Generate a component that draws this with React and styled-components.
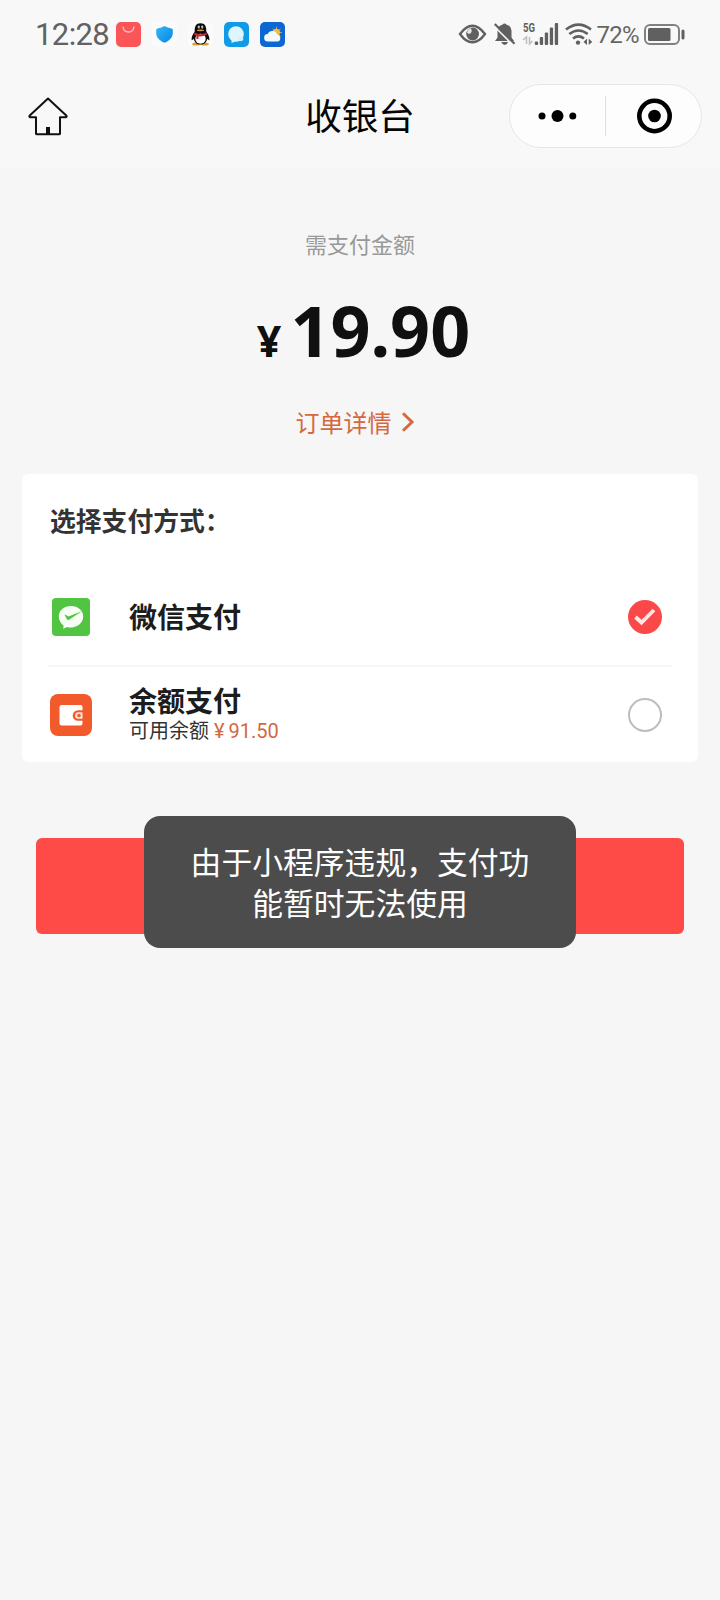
import React, { useState } from "react";
import styled, { createGlobalStyle } from "styled-components";

const methods = [
  { id: "wechat", name: "微信支付", icon: <WechatPayIcon /> },
  { id: "balance", name: "余额支付", icon: <WalletIcon />, balance: "91.50" },
];

export default function App() {
  const [selected, setSelected] = useState("wechat");

  return (
    <Page>
      <GlobalStyle />
      <StatusBar />
      <NavBar>
        <HomeButton aria-label="home">
          <HomeIcon />
        </HomeButton>
        <Title>收银台</Title>
        <Capsule>
          <CapsuleButton aria-label="more">
            <svg width="40" height="14" viewBox="0 0 40 14">
              <circle cx="4" cy="7" r="3.5" />
              <circle cx="19.5" cy="7" r="6" />
              <circle cx="34.8" cy="7" r="3.5" />
            </svg>
          </CapsuleButton>
          <CapsuleLine />
          <CapsuleButton aria-label="close">
            <svg width="36" height="36" viewBox="0 0 36 36">
              <circle cx="18.5" cy="18" r="15.2" fill="none" stroke="#000" strokeWidth="4.6" />
              <circle cx="18.5" cy="18" r="6.3" />
            </svg>
          </CapsuleButton>
        </Capsule>
      </NavBar>

      <Summary>
        <Label>需支付金额</Label>
        <Amount>
          <Currency>¥</Currency>
          <Price>19.90</Price>
        </Amount>
        <DetailLink>
          订单详情
          <svg width="14" height="20" viewBox="0 0 14 20" fill="none">
            <path d="M2 1.2 L11 10 L2 18.8" stroke="#d5683f" strokeWidth="3" />
          </svg>
        </DetailLink>
      </Summary>

      <Card>
        <CardTitle>选择支付方式：</CardTitle>
        {methods.map((item) => (
          <Method key={item.id} onClick={() => setSelected(item.id)}>
            <MethodIcon>{item.icon}</MethodIcon>
            <MethodText>
              <MethodName>{item.name}</MethodName>
              {item.balance ? (
                <Balance>
                  可用余额<b>¥</b>
                  <i>{item.balance}</i>
                </Balance>
              ) : null}
            </MethodText>
            <Radio checked={selected === item.id} />
          </Method>
        ))}
      </Card>

      <PayArea>
        <PayButton aria-label="pay" />
        <Toast>
          由于小程序违规，支付功
          <br />
          能暂时无法使用
        </Toast>
      </PayArea>
    </Page>
  );
}

function StatusBar() {
  return (
    <Status>
      <Time>12:28</Time>
      <AppIcons>
        <svg width="25" height="25" viewBox="0 0 25 25">
          <rect width="25" height="25" rx="5" fill="#fb5558" />
          <path d="M7 4.5 Q7.5 10 12.5 10 T18 4.5" fill="none" stroke="#ffc2b8" strokeWidth="1.4" />
        </svg>
        <svg width="25" height="25" viewBox="0 0 25 25">
          <defs>
            <linearGradient id="shield" x1="0" y1="0" x2="1" y2="1">
              <stop offset="0" stopColor="#30b8f5" />
              <stop offset="1" stopColor="#0a86e6" />
            </linearGradient>
          </defs>
          <rect width="25" height="25" rx="5" fill="#fbfbfb" />
          <path d="M12.5 4 Q15.5 6 19.6 6.4 Q20.8 6.6 20.8 8 V11.5 Q20.5 16.5 14.5 20 Q12.5 21.2 10.5 20 Q4.5 16.5 4.2 11.5 V8 Q4.2 6.6 5.4 6.4 Q9.5 6 12.5 4Z" fill="url(#shield)" />
        </svg>
        <svg width="25" height="25" viewBox="0 0 25 25">
          <rect width="25" height="25" rx="5" fill="#fbfbfb" />
          <ellipse cx="8.3" cy="22" rx="4.2" ry="1.6" fill="#e0a030" />
          <ellipse cx="16.7" cy="22" rx="4.2" ry="1.6" fill="#e0a030" />
          <path d="M12.5 1.2 C7.8 1.2 6.6 4.6 6.7 9.5 C5 12 3.3 15 3.6 18 Q4.2 18.6 5.6 16.7 Q7 22.6 12.5 22.6 T19.4 16.7 Q20.8 18.6 21.4 18 C21.7 15 20 12 18.3 9.5 C18.4 4.6 17.2 1.2 12.5 1.2Z" fill="#0c0a0c" />
          <ellipse cx="12.5" cy="16.8" rx="5.2" ry="5" fill="#fff" />
          <ellipse cx="10.8" cy="5" rx="1.1" ry="1.6" fill="#fff" />
          <ellipse cx="14.2" cy="5" rx="1.1" ry="1.6" fill="#fff" />
          <circle cx="11" cy="5.1" r=".6" />
          <circle cx="14" cy="5.1" r=".6" />
          <ellipse cx="12.5" cy="8.3" rx="3.6" ry=".9" fill="#d99a3a" />
          <path d="M6.6 10.5 Q12.5 13.8 18.4 10.5 L18.8 12.8 Q15 14.8 10.5 14.4 V17 H8.4 V14 L6.2 12.8Z" fill="#c02a35" />
        </svg>
        <svg width="25" height="25" viewBox="0 0 25 25">
          <rect width="25" height="25" rx="5" fill="#0f9be8" />
          <circle cx="12" cy="12" r="7.8" fill="#dff5fe" />
          <circle cx="17" cy="16.8" r="2.4" fill="#cdf0fc" />
          <path d="M7.5 18 L7.6 21 L12 19Z" fill="#dff5fe" />
        </svg>
        <svg width="25" height="25" viewBox="0 0 25 25">
          <rect width="25" height="25" rx="5" fill="#0c66d4" />
          <path d="M16.5 4.8 V16 M11 10.5 H22 M12.5 6.8 L20.5 14.5 M20.5 6.8 L12.5 14.5" stroke="#b9a565" strokeWidth="1" />
          <circle cx="16.3" cy="10.5" r="3.7" fill="#f0bd4b" />
          <path d="M8 19.5 a3.7 3.7 0 0 1 -.3-7.4 a5 5 0 0 1 9.4 .5 a3.5 3.5 0 0 1 .4 6.9Z" fill="#f3faff" />
        </svg>
      </AppIcons>
      <Signals>
        <svg width="139" height="28" viewBox="458 20 139 28" fill="#606060" overflow="visible">
          {/* eye */}
          <path d="M460 34 Q466 25.7 472.4 25.7 T485 34 Q479 42.3 472.4 42.3 T460 34Z" fill="none" stroke="#606060" strokeWidth="2.4" />
          <circle cx="472.6" cy="34" r="6.4" />
          <path d="M467 32.5 Q467.5 28.8 471 28.2 Q473 32.5 469.5 33.8 Q468 34.2 467 32.5Z" fill="#e4e4e4" />
          {/* muted bell */}
          <path d="M495 41 L497.5 37.5 V31 Q498 25.5 502.3 24.8 Q504.5 22 506.7 24.8 Q511 25.5 511.5 31 V37.5 L514 41Z M501.3 42 H508 Q507 45 504.7 45 T501.3 42Z" />
          <path d="M494.5 26.5 L512.5 44.5" stroke="#f8f8f8" strokeWidth="1.6" />
          <path d="M494.8 24 L514.5 43.8" stroke="#606060" strokeWidth="2.2" />
          {/* 5G and signal bars */}
          <text x="523" y="32.4" fontFamily="Roboto, sans-serif" fontWeight="700" fontSize="12.5" textLength="12" lengthAdjust="spacingAndGlyphs">5G</text>
          <path d="M523 40 L526.5 37 V44 M532.5 41 L529.5 44 V37" fill="none" stroke="#bdbdbd" strokeWidth="1.5" />
          <rect x="534.8" y="41.5" width="3.3" height="3.5" rx="1" />
          <rect x="539.8" y="37" width="3.3" height="8" rx="1" />
          <rect x="544.8" y="32.5" width="3.3" height="12.5" rx="1" />
          <rect x="549.8" y="27.5" width="3.3" height="17.5" rx="1" />
          <rect x="554.8" y="23" width="3.3" height="22" rx="1" />
          {/* wifi */}
          <path d="M566 29.5 Q578.5 19.8 591 29.5 M569.3 34 Q578.5 27 587.7 34 M573 38.5 Q578.5 34.2 584 38.5" fill="none" stroke="#606060" strokeWidth="2.6" />
          <circle cx="578" cy="42.6" r="2.2" />
          <path d="M583.5 42 L587 38.5 V45Z M588.7 38.5 L592.2 42 L588.7 45Z" />
        </svg>
        <Percent>72%</Percent>
        <svg width="41" height="22" viewBox="0 0 41 22">
          <rect x="1" y="2" width="34" height="19" rx="5" fill="none" stroke="#808080" strokeWidth="2" />
          <rect x="4" y="5" width="22.5" height="13" rx="1.5" fill="#606060" />
          <rect x="37.5" y="6.5" width="3" height="10" rx="1.5" fill="#606060" />
        </svg>
      </Signals>
    </Status>
  );
}

function HomeIcon() {
  return (
    <svg width="40" height="39" viewBox="0 0 40 39" fill="none" stroke="#111" strokeWidth="2" strokeLinejoin="round">
      <path d="M20 1.5 L1.5 18.8 Q1 20.2 2.5 20.3 H8 V36.4 Q8 37.3 9 37.3 H31 Q32 37.3 32 36.4 V20.3 H37.5 Q39 20.2 38.5 18.8Z" />
      <path d="M20 30 V37" strokeWidth="4" />
    </svg>
  );
}

function WechatPayIcon() {
  return (
    <svg width="38" height="38" viewBox="0 0 38 38">
      <rect width="38" height="38" rx="4" fill="#51c442" />
      <path d="M19 8 C26 8 31.2 12.6 31.2 18.5 S26 29.5 19 29.5 Q17 29.5 15.2 29 L11.2 30.8 L11.6 27.4 Q6.8 24 6.8 18.5 C6.8 12.6 12 8 19 8Z" fill="#f7fff5" />
      <path d="M12.4 16.2 L16.6 18.6 L30.3 13 L17.4 21.6 Q15.6 22.6 14.8 21.1Z" fill="#51c442" />
    </svg>
  );
}

function WalletIcon() {
  return (
    <svg width="42" height="42" viewBox="0 0 42 42">
      <rect width="42" height="42" rx="8" fill="#f25a2b" />
      <path d="M11.5 11 H30.5 Q32.5 11 32.5 13 V16.2 H28 A5.3 5.3 0 0 0 28 26.8 H32.5 V29.5 Q32.5 31.5 30.5 31.5 H11.5 Q9.5 31.5 9.5 29.5 V13 Q9.5 11 11.5 11Z" fill="#fff" />
      <path d="M32.5 18.3 H28.3 A3.2 3.2 0 0 0 28.3 24.7 H32.5Z" fill="#ffe3d8" />
      <circle cx="29" cy="21.5" r="1.8" fill="#f25a2b" />
    </svg>
  );
}

function Radio({ checked }) {
  return (
    <RadioDot $checked={checked}>
      {checked ? (
        <svg width="22" height="18" viewBox="0 0 22 18" fill="none">
          <path d="M1.5 9 L7.5 14.5 L20 2" stroke="#ffe9e7" strokeWidth="3.8" />
        </svg>
      ) : null}
    </RadioDot>
  );
}

const GlobalStyle = createGlobalStyle`
  * {
    box-sizing: border-box;
  }

  body {
    margin: 0;
    background: #f6f6f6;
  }

  svg {
    display: block;
    flex-shrink: 0;
  }

  button {
    padding: 0;
    border: none;
    background: transparent;
  }
`;

const Page = styled.div`
  width: 720px;
  min-height: 1600px;
  background: #f6f6f6;
  font-family: "Noto Sans CJK SC", sans-serif;
`;

const Status = styled.div`
  display: flex;
  align-items: center;
  height: 68px;
  padding: 0 35px;
  background: #f8f8f8;
`;

const Time = styled.span`
  width: 80.5px;
  font-family: Roboto, sans-serif;
  font-size: 31px;
  letter-spacing: -0.6px;
  color: #626262;
`;

const AppIcons = styled.div`
  display: flex;
  gap: 11px;
`;

const Signals = styled.div`
  display: flex;
  align-items: center;
  margin-left: auto;
`;

const Percent = styled.span`
  width: 47.5px;
  padding-top: 1px;
  font-family: Roboto, sans-serif;
  font-size: 24px;
  letter-spacing: -0.8px;
  color: #666;
  white-space: nowrap;
`;

const NavBar = styled.div`
  display: grid;
  grid-template-columns: 1fr auto 1fr;
  align-items: center;
  height: 99px;
  padding: 0 18px 3px;
  background: #f8f8f8;
`;

const HomeButton = styled.button`
  justify-self: start;
  margin-left: 10px;
`;

const Title = styled.h1`
  margin: 0 0 2px;
  font-size: 36.6px;
  line-height: 48px;
  font-weight: 400;
  color: #050505;
`;

const Capsule = styled.div`
  justify-self: end;
  display: flex;
  align-items: center;
  width: 193px;
  height: 64px;
  border: 1px solid #e6e6e6;
  border-radius: 32px;
  background: #fdfdfd;
`;

const CapsuleButton = styled.button`
  flex: 1;
  display: flex;
  justify-content: center;
`;

const CapsuleLine = styled.div`
  width: 1px;
  height: 40px;
  background: #dedede;
`;

const Summary = styled.div`
  display: flex;
  flex-direction: column;
  align-items: center;
  height: 307px;
  padding-top: 61px;
`;

const Label = styled.div`
  font-size: 22px;
  line-height: 30px;
  color: #999;
`;

const Amount = styled.div`
  display: flex;
  align-items: baseline;
  gap: 9px;
  margin-top: 27px;
  padding-left: 7px;
  font-family: "Noto Sans", sans-serif;
  font-weight: 700;
  line-height: 90px;
  color: #101010;
`;

const Currency = styled.span`
  font-size: 43px;
`;

const Price = styled.span`
  font-size: 70px;
`;

const DetailLink = styled.a`
  display: flex;
  align-items: center;
  gap: 9px;
  margin: 19px 10px 0 0;
  font-size: 24px;
  line-height: 34px;
  color: #d5683f;
`;

const Card = styled.div`
  height: 288px;
  margin: 0 22px;
  padding: 28px 26px 0;
  border-radius: 6px;
  background: #fff;
`;

const CardTitle = styled.h2`
  margin: 0 0 30px 2px;
  font-size: 25.8px;
  line-height: 36px;
  font-weight: 700;
  color: #333;
`;

const Method = styled.div`
  display: flex;
  align-items: center;
  height: 97px;
  padding-right: 10px;

  & + & {
    border-top: 2px solid #f5f5f5;
  }
`;

const MethodIcon = styled.div`
  display: flex;
  justify-content: center;
  width: 46px;
  margin-right: 35px;
`;

const MethodText = styled.div`
  flex: 1;
`;

const MethodName = styled.div`
  margin-top: -1px;
  font-size: 28px;
  line-height: 32px;
  font-weight: 700;
  color: #1c1c1c;
`;

const Balance = styled.div`
  font-size: 20px;
  line-height: 27px;
  color: #333;

  b,
  i {
    font-family: Roboto, sans-serif;
    font-style: normal;
    font-weight: 400;
    color: #d5683f;
  }

  b {
    margin: 0 4px 0 5px;
  }
`;

const RadioDot = styled.div`
  display: flex;
  align-items: center;
  justify-content: center;
  width: 34px;
  height: 34px;
  border: ${({ $checked }) => ($checked ? "none" : "2px solid #bdbdbd")};
  border-radius: 50%;
  background: ${({ $checked }) => ($checked ? "#fb4848" : "#fff")};
`;

const PayArea = styled.div`
  position: relative;
  margin: 76px 36px 0;
`;

const PayButton = styled.button`
  display: block;
  width: 100%;
  height: 96px;
  border-radius: 6px;
  background: #ff4b48;
`;

const Toast = styled.div`
  position: absolute;
  top: -22px;
  left: 108px;
  width: 432px;
  height: 132px;
  padding-top: 24px;
  border-radius: 16px;
  background: #4c4c4c;
  font-size: 30.8px;
  line-height: 41px;
  text-align: center;
  color: #fff;
`;
